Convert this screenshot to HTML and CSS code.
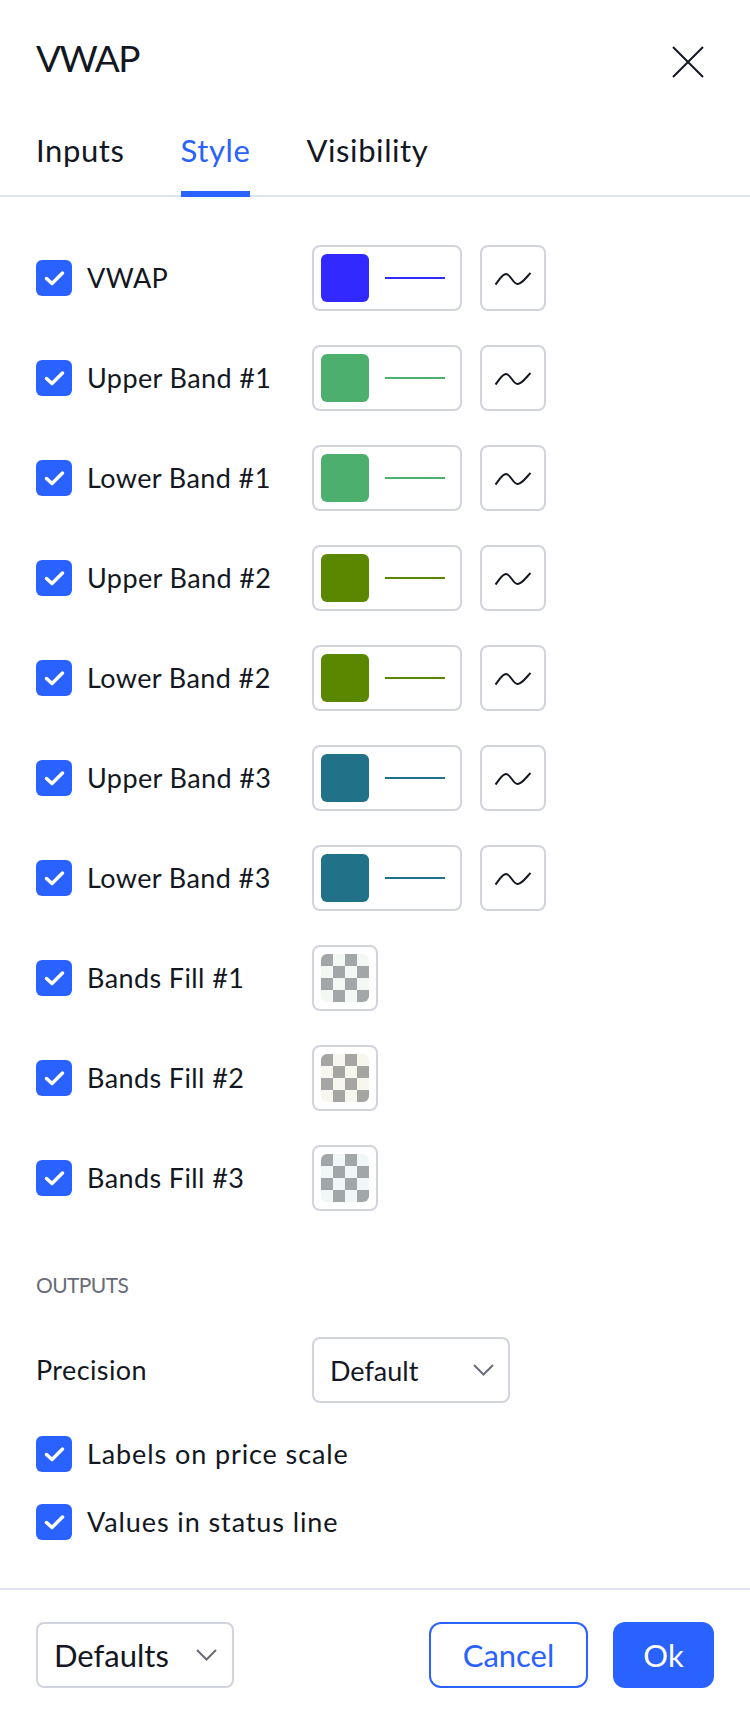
FILE: index.html
```html
<!DOCTYPE html>
<html>
<head>
    <title>VWAP</title>
    <link rel="stylesheet" href="styles.css">
</head>
<body>
<div id="dialog">
    <div class="header">
        <div class="title">VWAP</div>
        <button class="close">
            <svg width="32" height="32" viewBox="0 0 32 32"><path d="M1 1L31 31M31 1L1 31" stroke="#131722" stroke-width="2" fill="none"/></svg>
        </button>
    </div>

    <div class="tabs">
        <div class="tab">Inputs</div>
        <div class="tab active">Style</div>
        <div class="tab">Visibility</div>
    </div>

    <div class="content">
        <div class="plots">
            <div class="row">
                <label class="check"><span class="box"></span>VWAP</label>
                <button class="color c-vwap"><span class="swatch"></span><span class="line"></span></button>
                <button class="linestyle"><span class="wave"></span></button>
            </div>
            <div class="row">
                <label class="check"><span class="box"></span>Upper Band #1</label>
                <button class="color c-band1"><span class="swatch"></span><span class="line"></span></button>
                <button class="linestyle"><span class="wave"></span></button>
            </div>
            <div class="row">
                <label class="check"><span class="box"></span>Lower Band #1</label>
                <button class="color c-band1"><span class="swatch"></span><span class="line"></span></button>
                <button class="linestyle"><span class="wave"></span></button>
            </div>
            <div class="row">
                <label class="check"><span class="box"></span>Upper Band #2</label>
                <button class="color c-band2"><span class="swatch"></span><span class="line"></span></button>
                <button class="linestyle"><span class="wave"></span></button>
            </div>
            <div class="row">
                <label class="check"><span class="box"></span>Lower Band #2</label>
                <button class="color c-band2"><span class="swatch"></span><span class="line"></span></button>
                <button class="linestyle"><span class="wave"></span></button>
            </div>
            <div class="row">
                <label class="check"><span class="box"></span>Upper Band #3</label>
                <button class="color c-band3"><span class="swatch"></span><span class="line"></span></button>
                <button class="linestyle"><span class="wave"></span></button>
            </div>
            <div class="row">
                <label class="check"><span class="box"></span>Lower Band #3</label>
                <button class="color c-band3"><span class="swatch"></span><span class="line"></span></button>
                <button class="linestyle"><span class="wave"></span></button>
            </div>
            <div class="row">
                <label class="check"><span class="box"></span>Bands Fill #1</label>
                <button class="fill"><span class="checker fill1"></span></button>
            </div>
            <div class="row">
                <label class="check"><span class="box"></span>Bands Fill #2</label>
                <button class="fill"><span class="checker fill2"></span></button>
            </div>
            <div class="row">
                <label class="check"><span class="box"></span>Bands Fill #3</label>
                <button class="fill"><span class="checker fill3"></span></button>
            </div>
        </div>

        <div class="section-title">OUTPUTS</div>

        <div class="row precision">
            <div class="field-label">Precision</div>
            <button class="select">Default<span class="chevron"></span></button>
        </div>

        <label class="check option"><span class="box"></span>Labels on price scale</label>
        <label class="check option"><span class="box"></span>Values in status line</label>
    </div>

    <div class="footer">
        <button class="select defaults">Defaults<span class="chevron"></span></button>
        <div class="actions">
            <button class="btn-cancel">Cancel</button>
            <button class="btn-ok">Ok</button>
        </div>
    </div>
</div>
</body>
</html>
```

FILE: styles.css
```css
* {
    padding: 0;
    margin: 0;
    box-sizing: border-box;
}

body {
    background-color: #ffffff;
    font-family: Lato, "Liberation Sans", sans-serif;
    color: #131722;
}

button {
    font-family: inherit;
    color: inherit;
    background: none;
    border: none;
    cursor: pointer;
    outline: none;
}

#dialog {
    width: 750px;
    height: 1718px;
    display: flex;
    flex-direction: column;
}

/* header */
.header {
    display: flex;
    justify-content: space-between;
    align-items: flex-start;
    padding: 35px 46px 0 36px;
    margin-bottom: 50px;
}

.title {
    font-size: 37px;
    line-height: 46px;
    letter-spacing: -1.5px;
}

.close {
    width: 32px;
    height: 32px;
    margin-top: 11px;
}

.close svg {
    display: block;
}

/* tabs */
.tabs {
    display: flex;
    gap: 56px;
    padding: 0 36px;
    border-bottom: 2px solid #e0e3eb;
}

.tab {
    font-size: 31px;
    line-height: 38px;
    letter-spacing: 0.6px;
    padding-bottom: 22px;
    border-bottom: 6px solid transparent;
    margin-bottom: -2px;
}

.tab.active {
    color: #2962ff;
    border-bottom-color: #2962ff;
}

/* style list */
.content {
    flex: 1;
    padding: 48px 36px 0 36px;
}

.plots {
    display: flex;
    flex-direction: column;
    gap: 34px;
}

.row {
    display: flex;
    align-items: center;
    height: 66px;
}

.check {
    display: flex;
    align-items: center;
    gap: 15px;
    font-size: 27px;
    line-height: 32px;
    letter-spacing: 0.4px;
}

.row .check,
.field-label {
    width: 276px;
    flex: none;
}

.box {
    width: 36px;
    height: 36px;
    border-radius: 6px;
    background: #2962ff url("data:image/svg+xml,%3Csvg xmlns='http://www.w3.org/2000/svg' viewBox='0 0 36 36'%3E%3Cpath d='M10.5 18.5l5.5 5 10.5-10.5' stroke='white' stroke-width='3.5' fill='none' stroke-linecap='round' stroke-linejoin='round'/%3E%3C/svg%3E") center / 36px 36px no-repeat;
    flex: none;
}

.option {
    letter-spacing: 0.9px;
}

.color,
.linestyle,
.fill,
.select {
    height: 66px;
    border: 2px solid #d1d4dc;
    border-radius: 8px;
}

.color {
    width: 150px;
    display: flex;
    align-items: center;
    gap: 16px;
    padding: 0 7px;
}

.swatch {
    width: 48px;
    height: 48px;
    border-radius: 6px;
    background-color: currentColor;
}

.line {
    width: 60px;
    height: 2px;
    background-color: currentColor;
}

.c-vwap { color: #3129ff; }
.c-band1 { color: #4caf6e; }
.c-band2 { color: #5b8600; }
.c-band3 { color: #217189; }

.linestyle {
    width: 66px;
    margin-left: 18px;
    display: flex;
    align-items: center;
    justify-content: center;
}

.wave {
    width: 38px;
    height: 15px;
    background: url("data:image/svg+xml,%3Csvg xmlns='http://www.w3.org/2000/svg' viewBox='0 0 38 15'%3E%3Cpath d='M1.5 13.5C5 9.5 8 3 12 3c4.5 0 7 10 11.5 10S32.5 6 36.5 2' stroke='%23131722' stroke-width='2' fill='none'/%3E%3C/svg%3E") center / 38px 15px no-repeat;
}

.fill {
    width: 66px;
    display: flex;
    align-items: center;
    justify-content: center;
}

.checker {
    width: 48px;
    height: 48px;
    border-radius: 6px;
}

.fill1 { background: repeating-conic-gradient(#f3f8f4 0 25%, #a3a6a8 0 50%) 0 0 / 24px 24px; }
.fill2 { background: repeating-conic-gradient(#f7f7ef 0 25%, #a5a5a3 0 50%) 0 0 / 24px 24px; }
.fill3 { background: repeating-conic-gradient(#f1f6f7 0 25%, #a3a6a8 0 50%) 0 0 / 24px 24px; }

/* outputs */
.section-title {
    margin-top: 61px;
    font-size: 21px;
    line-height: 26px;
    letter-spacing: -0.6px;
    color: #6a6d78;
}

.precision {
    margin-top: 39px;
}

.field-label {
    font-size: 27px;
    line-height: 32px;
    letter-spacing: 0.4px;
}

.select {
    width: 198px;
    display: flex;
    align-items: center;
    justify-content: space-between;
    padding: 0 14px 0 16px;
    font-size: 27px;
    text-align: left;
}

.chevron {
    width: 21px;
    height: 12px;
    background: url("data:image/svg+xml,%3Csvg xmlns='http://www.w3.org/2000/svg' viewBox='0 0 21 12'%3E%3Cpath d='M1 1l9.5 9.5L20 1' stroke='%236a6d78' stroke-width='2' fill='none'/%3E%3C/svg%3E") center / 21px 12px no-repeat;
}

.option {
    height: 36px;
}

.precision + .option {
    margin-top: 33px;
}

.option + .option {
    margin-top: 32px;
}

/* footer */
.footer {
    display: flex;
    justify-content: space-between;
    padding: 32px 36px 30px 36px;
    border-top: 2px solid #e0e3eb;
    margin-top: 48px;
}

.defaults {
    font-size: 31px;
    padding: 0 15px 0 16px;
}

.actions {
    display: flex;
    gap: 25px;
}

.btn-cancel,
.btn-ok {
    height: 66px;
    border-radius: 12px;
    font-size: 31px;
}

.btn-cancel {
    width: 159px;
    border: 2px solid #2962ff;
    color: #2962ff;
}

.btn-ok {
    width: 101px;
    background-color: #2962ff;
    color: #ffffff;
}
```
